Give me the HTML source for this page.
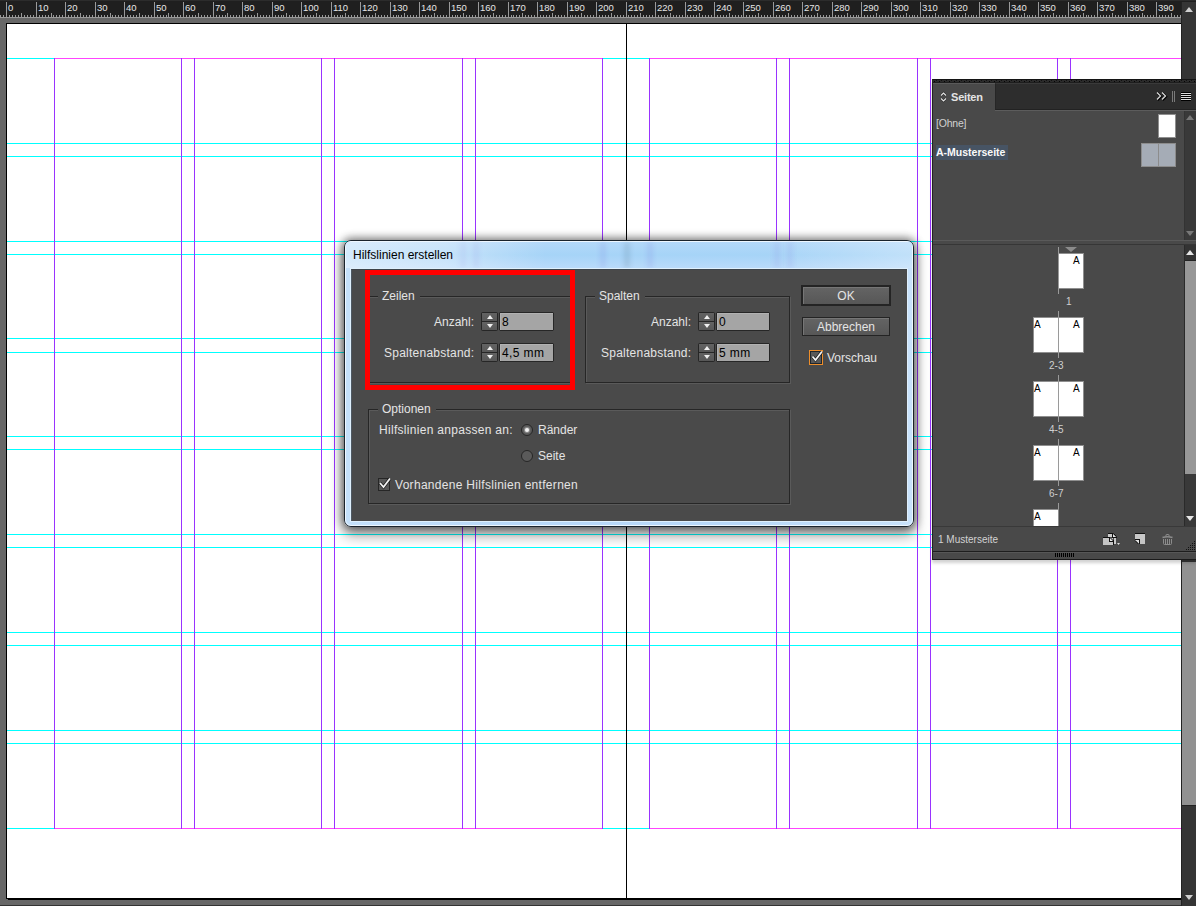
<!DOCTYPE html>
<html><head><meta charset="utf-8">
<style>
*{margin:0;padding:0;box-sizing:border-box}
html,body{width:1196px;height:906px;overflow:hidden;background:#676767;font-family:"Liberation Sans",sans-serif}
.abs{position:absolute}
#ruler{position:absolute;left:0;top:0;width:1196px;height:18px;background:#1f1f1f;border-top:1px solid #2c2c2c}
#ruler svg{position:absolute;left:0;top:0}
.rl{position:absolute;top:1px;font-size:9.5px;line-height:11px;color:#e6e6e6;letter-spacing:0}
#page{position:absolute;left:6px;top:23px;width:1176px;height:876px;background:#fff;border:1px solid #000}
#pshadow{position:absolute;left:8px;top:899px;width:1173px;height:1px;background:#000}
#botline{position:absolute;left:0;top:905px;width:1196px;height:1px;background:#333}
#vscroll{position:absolute;left:1181px;top:2px;width:15px;height:904px;background:#353535;border-left:1px solid #222}
#guides{position:absolute;left:0;top:0}
.tri-up{position:absolute;width:0;height:0;border-left:4px solid transparent;border-right:4px solid transparent;border-bottom:5px solid #d0d0d0}
.tri-dn{position:absolute;width:0;height:0;border-left:4px solid transparent;border-right:4px solid transparent;border-top:5px solid #d0d0d0}
</style></head><body>

<div id="ruler">
<svg width="1196" height="18" style="top:-1px"><g fill="#9a9a9a" shape-rendering="crispEdges"><rect x="0" y="15" width="1" height="2"/><rect x="3" y="15" width="1" height="2"/><rect x="6" y="2" width="1" height="15"/><rect x="9" y="15" width="1" height="2"/><rect x="12" y="15" width="1" height="2"/><rect x="15" y="15" width="1" height="2"/><rect x="18" y="15" width="1" height="2"/><rect x="21" y="13" width="1" height="4"/><rect x="24" y="15" width="1" height="2"/><rect x="27" y="15" width="1" height="2"/><rect x="30" y="15" width="1" height="2"/><rect x="33" y="15" width="1" height="2"/><rect x="36" y="2" width="1" height="15"/><rect x="39" y="15" width="1" height="2"/><rect x="42" y="15" width="1" height="2"/><rect x="45" y="15" width="1" height="2"/><rect x="48" y="15" width="1" height="2"/><rect x="51" y="13" width="1" height="4"/><rect x="53" y="15" width="1" height="2"/><rect x="56" y="15" width="1" height="2"/><rect x="59" y="15" width="1" height="2"/><rect x="62" y="15" width="1" height="2"/><rect x="65" y="2" width="1" height="15"/><rect x="68" y="15" width="1" height="2"/><rect x="71" y="15" width="1" height="2"/><rect x="74" y="15" width="1" height="2"/><rect x="77" y="15" width="1" height="2"/><rect x="80" y="13" width="1" height="4"/><rect x="83" y="15" width="1" height="2"/><rect x="86" y="15" width="1" height="2"/><rect x="89" y="15" width="1" height="2"/><rect x="92" y="15" width="1" height="2"/><rect x="95" y="2" width="1" height="15"/><rect x="98" y="15" width="1" height="2"/><rect x="101" y="15" width="1" height="2"/><rect x="104" y="15" width="1" height="2"/><rect x="107" y="15" width="1" height="2"/><rect x="110" y="13" width="1" height="4"/><rect x="112" y="15" width="1" height="2"/><rect x="115" y="15" width="1" height="2"/><rect x="118" y="15" width="1" height="2"/><rect x="121" y="15" width="1" height="2"/><rect x="124" y="2" width="1" height="15"/><rect x="127" y="15" width="1" height="2"/><rect x="130" y="15" width="1" height="2"/><rect x="133" y="15" width="1" height="2"/><rect x="136" y="15" width="1" height="2"/><rect x="139" y="13" width="1" height="4"/><rect x="142" y="15" width="1" height="2"/><rect x="145" y="15" width="1" height="2"/><rect x="148" y="15" width="1" height="2"/><rect x="151" y="15" width="1" height="2"/><rect x="154" y="2" width="1" height="15"/><rect x="157" y="15" width="1" height="2"/><rect x="160" y="15" width="1" height="2"/><rect x="163" y="15" width="1" height="2"/><rect x="166" y="15" width="1" height="2"/><rect x="168" y="13" width="1" height="4"/><rect x="171" y="15" width="1" height="2"/><rect x="174" y="15" width="1" height="2"/><rect x="177" y="15" width="1" height="2"/><rect x="180" y="15" width="1" height="2"/><rect x="183" y="2" width="1" height="15"/><rect x="186" y="15" width="1" height="2"/><rect x="189" y="15" width="1" height="2"/><rect x="192" y="15" width="1" height="2"/><rect x="195" y="15" width="1" height="2"/><rect x="198" y="13" width="1" height="4"/><rect x="201" y="15" width="1" height="2"/><rect x="204" y="15" width="1" height="2"/><rect x="207" y="15" width="1" height="2"/><rect x="210" y="15" width="1" height="2"/><rect x="213" y="2" width="1" height="15"/><rect x="216" y="15" width="1" height="2"/><rect x="219" y="15" width="1" height="2"/><rect x="222" y="15" width="1" height="2"/><rect x="225" y="15" width="1" height="2"/><rect x="227" y="13" width="1" height="4"/><rect x="230" y="15" width="1" height="2"/><rect x="233" y="15" width="1" height="2"/><rect x="236" y="15" width="1" height="2"/><rect x="239" y="15" width="1" height="2"/><rect x="242" y="2" width="1" height="15"/><rect x="245" y="15" width="1" height="2"/><rect x="248" y="15" width="1" height="2"/><rect x="251" y="15" width="1" height="2"/><rect x="254" y="15" width="1" height="2"/><rect x="257" y="13" width="1" height="4"/><rect x="260" y="15" width="1" height="2"/><rect x="263" y="15" width="1" height="2"/><rect x="266" y="15" width="1" height="2"/><rect x="269" y="15" width="1" height="2"/><rect x="272" y="2" width="1" height="15"/><rect x="275" y="15" width="1" height="2"/><rect x="278" y="15" width="1" height="2"/><rect x="281" y="15" width="1" height="2"/><rect x="283" y="15" width="1" height="2"/><rect x="286" y="13" width="1" height="4"/><rect x="289" y="15" width="1" height="2"/><rect x="292" y="15" width="1" height="2"/><rect x="295" y="15" width="1" height="2"/><rect x="298" y="15" width="1" height="2"/><rect x="301" y="2" width="1" height="15"/><rect x="304" y="15" width="1" height="2"/><rect x="307" y="15" width="1" height="2"/><rect x="310" y="15" width="1" height="2"/><rect x="313" y="15" width="1" height="2"/><rect x="316" y="13" width="1" height="4"/><rect x="319" y="15" width="1" height="2"/><rect x="322" y="15" width="1" height="2"/><rect x="325" y="15" width="1" height="2"/><rect x="328" y="15" width="1" height="2"/><rect x="331" y="2" width="1" height="15"/><rect x="334" y="15" width="1" height="2"/><rect x="337" y="15" width="1" height="2"/><rect x="340" y="15" width="1" height="2"/><rect x="342" y="15" width="1" height="2"/><rect x="345" y="13" width="1" height="4"/><rect x="348" y="15" width="1" height="2"/><rect x="351" y="15" width="1" height="2"/><rect x="354" y="15" width="1" height="2"/><rect x="357" y="15" width="1" height="2"/><rect x="360" y="2" width="1" height="15"/><rect x="363" y="15" width="1" height="2"/><rect x="366" y="15" width="1" height="2"/><rect x="369" y="15" width="1" height="2"/><rect x="372" y="15" width="1" height="2"/><rect x="375" y="13" width="1" height="4"/><rect x="378" y="15" width="1" height="2"/><rect x="381" y="15" width="1" height="2"/><rect x="384" y="15" width="1" height="2"/><rect x="387" y="15" width="1" height="2"/><rect x="390" y="2" width="1" height="15"/><rect x="393" y="15" width="1" height="2"/><rect x="396" y="15" width="1" height="2"/><rect x="398" y="15" width="1" height="2"/><rect x="401" y="15" width="1" height="2"/><rect x="404" y="13" width="1" height="4"/><rect x="407" y="15" width="1" height="2"/><rect x="410" y="15" width="1" height="2"/><rect x="413" y="15" width="1" height="2"/><rect x="416" y="15" width="1" height="2"/><rect x="419" y="2" width="1" height="15"/><rect x="422" y="15" width="1" height="2"/><rect x="425" y="15" width="1" height="2"/><rect x="428" y="15" width="1" height="2"/><rect x="431" y="15" width="1" height="2"/><rect x="434" y="13" width="1" height="4"/><rect x="437" y="15" width="1" height="2"/><rect x="440" y="15" width="1" height="2"/><rect x="443" y="15" width="1" height="2"/><rect x="446" y="15" width="1" height="2"/><rect x="449" y="2" width="1" height="15"/><rect x="452" y="15" width="1" height="2"/><rect x="455" y="15" width="1" height="2"/><rect x="457" y="15" width="1" height="2"/><rect x="460" y="15" width="1" height="2"/><rect x="463" y="13" width="1" height="4"/><rect x="466" y="15" width="1" height="2"/><rect x="469" y="15" width="1" height="2"/><rect x="472" y="15" width="1" height="2"/><rect x="475" y="15" width="1" height="2"/><rect x="478" y="2" width="1" height="15"/><rect x="481" y="15" width="1" height="2"/><rect x="484" y="15" width="1" height="2"/><rect x="487" y="15" width="1" height="2"/><rect x="490" y="15" width="1" height="2"/><rect x="493" y="13" width="1" height="4"/><rect x="496" y="15" width="1" height="2"/><rect x="499" y="15" width="1" height="2"/><rect x="502" y="15" width="1" height="2"/><rect x="505" y="15" width="1" height="2"/><rect x="508" y="2" width="1" height="15"/><rect x="511" y="15" width="1" height="2"/><rect x="513" y="15" width="1" height="2"/><rect x="516" y="15" width="1" height="2"/><rect x="519" y="15" width="1" height="2"/><rect x="522" y="13" width="1" height="4"/><rect x="525" y="15" width="1" height="2"/><rect x="528" y="15" width="1" height="2"/><rect x="531" y="15" width="1" height="2"/><rect x="534" y="15" width="1" height="2"/><rect x="537" y="2" width="1" height="15"/><rect x="540" y="15" width="1" height="2"/><rect x="543" y="15" width="1" height="2"/><rect x="546" y="15" width="1" height="2"/><rect x="549" y="15" width="1" height="2"/><rect x="552" y="13" width="1" height="4"/><rect x="555" y="15" width="1" height="2"/><rect x="558" y="15" width="1" height="2"/><rect x="561" y="15" width="1" height="2"/><rect x="564" y="15" width="1" height="2"/><rect x="567" y="2" width="1" height="15"/><rect x="570" y="15" width="1" height="2"/><rect x="572" y="15" width="1" height="2"/><rect x="575" y="15" width="1" height="2"/><rect x="578" y="15" width="1" height="2"/><rect x="581" y="13" width="1" height="4"/><rect x="584" y="15" width="1" height="2"/><rect x="587" y="15" width="1" height="2"/><rect x="590" y="15" width="1" height="2"/><rect x="593" y="15" width="1" height="2"/><rect x="596" y="2" width="1" height="15"/><rect x="599" y="15" width="1" height="2"/><rect x="602" y="15" width="1" height="2"/><rect x="605" y="15" width="1" height="2"/><rect x="608" y="15" width="1" height="2"/><rect x="611" y="13" width="1" height="4"/><rect x="614" y="15" width="1" height="2"/><rect x="617" y="15" width="1" height="2"/><rect x="620" y="15" width="1" height="2"/><rect x="623" y="15" width="1" height="2"/><rect x="626" y="2" width="1" height="15"/><rect x="628" y="15" width="1" height="2"/><rect x="631" y="15" width="1" height="2"/><rect x="634" y="15" width="1" height="2"/><rect x="637" y="15" width="1" height="2"/><rect x="640" y="13" width="1" height="4"/><rect x="643" y="15" width="1" height="2"/><rect x="646" y="15" width="1" height="2"/><rect x="649" y="15" width="1" height="2"/><rect x="652" y="15" width="1" height="2"/><rect x="655" y="2" width="1" height="15"/><rect x="658" y="15" width="1" height="2"/><rect x="661" y="15" width="1" height="2"/><rect x="664" y="15" width="1" height="2"/><rect x="667" y="15" width="1" height="2"/><rect x="670" y="13" width="1" height="4"/><rect x="673" y="15" width="1" height="2"/><rect x="676" y="15" width="1" height="2"/><rect x="679" y="15" width="1" height="2"/><rect x="682" y="15" width="1" height="2"/><rect x="685" y="2" width="1" height="15"/><rect x="687" y="15" width="1" height="2"/><rect x="690" y="15" width="1" height="2"/><rect x="693" y="15" width="1" height="2"/><rect x="696" y="15" width="1" height="2"/><rect x="699" y="13" width="1" height="4"/><rect x="702" y="15" width="1" height="2"/><rect x="705" y="15" width="1" height="2"/><rect x="708" y="15" width="1" height="2"/><rect x="711" y="15" width="1" height="2"/><rect x="714" y="2" width="1" height="15"/><rect x="717" y="15" width="1" height="2"/><rect x="720" y="15" width="1" height="2"/><rect x="723" y="15" width="1" height="2"/><rect x="726" y="15" width="1" height="2"/><rect x="729" y="13" width="1" height="4"/><rect x="732" y="15" width="1" height="2"/><rect x="735" y="15" width="1" height="2"/><rect x="738" y="15" width="1" height="2"/><rect x="741" y="15" width="1" height="2"/><rect x="743" y="2" width="1" height="15"/><rect x="746" y="15" width="1" height="2"/><rect x="749" y="15" width="1" height="2"/><rect x="752" y="15" width="1" height="2"/><rect x="755" y="15" width="1" height="2"/><rect x="758" y="13" width="1" height="4"/><rect x="761" y="15" width="1" height="2"/><rect x="764" y="15" width="1" height="2"/><rect x="767" y="15" width="1" height="2"/><rect x="770" y="15" width="1" height="2"/><rect x="773" y="2" width="1" height="15"/><rect x="776" y="15" width="1" height="2"/><rect x="779" y="15" width="1" height="2"/><rect x="782" y="15" width="1" height="2"/><rect x="785" y="15" width="1" height="2"/><rect x="788" y="13" width="1" height="4"/><rect x="791" y="15" width="1" height="2"/><rect x="794" y="15" width="1" height="2"/><rect x="797" y="15" width="1" height="2"/><rect x="800" y="15" width="1" height="2"/><rect x="802" y="2" width="1" height="15"/><rect x="805" y="15" width="1" height="2"/><rect x="808" y="15" width="1" height="2"/><rect x="811" y="15" width="1" height="2"/><rect x="814" y="15" width="1" height="2"/><rect x="817" y="13" width="1" height="4"/><rect x="820" y="15" width="1" height="2"/><rect x="823" y="15" width="1" height="2"/><rect x="826" y="15" width="1" height="2"/><rect x="829" y="15" width="1" height="2"/><rect x="832" y="2" width="1" height="15"/><rect x="835" y="15" width="1" height="2"/><rect x="838" y="15" width="1" height="2"/><rect x="841" y="15" width="1" height="2"/><rect x="844" y="15" width="1" height="2"/><rect x="847" y="13" width="1" height="4"/><rect x="850" y="15" width="1" height="2"/><rect x="853" y="15" width="1" height="2"/><rect x="856" y="15" width="1" height="2"/><rect x="858" y="15" width="1" height="2"/><rect x="861" y="2" width="1" height="15"/><rect x="864" y="15" width="1" height="2"/><rect x="867" y="15" width="1" height="2"/><rect x="870" y="15" width="1" height="2"/><rect x="873" y="15" width="1" height="2"/><rect x="876" y="13" width="1" height="4"/><rect x="879" y="15" width="1" height="2"/><rect x="882" y="15" width="1" height="2"/><rect x="885" y="15" width="1" height="2"/><rect x="888" y="15" width="1" height="2"/><rect x="891" y="2" width="1" height="15"/><rect x="894" y="15" width="1" height="2"/><rect x="897" y="15" width="1" height="2"/><rect x="900" y="15" width="1" height="2"/><rect x="903" y="15" width="1" height="2"/><rect x="906" y="13" width="1" height="4"/><rect x="909" y="15" width="1" height="2"/><rect x="912" y="15" width="1" height="2"/><rect x="914" y="15" width="1" height="2"/><rect x="917" y="15" width="1" height="2"/><rect x="920" y="2" width="1" height="15"/><rect x="923" y="15" width="1" height="2"/><rect x="926" y="15" width="1" height="2"/><rect x="929" y="15" width="1" height="2"/><rect x="932" y="15" width="1" height="2"/><rect x="935" y="13" width="1" height="4"/><rect x="938" y="15" width="1" height="2"/><rect x="941" y="15" width="1" height="2"/><rect x="944" y="15" width="1" height="2"/><rect x="947" y="15" width="1" height="2"/><rect x="950" y="2" width="1" height="15"/><rect x="953" y="15" width="1" height="2"/><rect x="956" y="15" width="1" height="2"/><rect x="959" y="15" width="1" height="2"/><rect x="962" y="15" width="1" height="2"/><rect x="965" y="13" width="1" height="4"/><rect x="968" y="15" width="1" height="2"/><rect x="971" y="15" width="1" height="2"/><rect x="973" y="15" width="1" height="2"/><rect x="976" y="15" width="1" height="2"/><rect x="979" y="2" width="1" height="15"/><rect x="982" y="15" width="1" height="2"/><rect x="985" y="15" width="1" height="2"/><rect x="988" y="15" width="1" height="2"/><rect x="991" y="15" width="1" height="2"/><rect x="994" y="13" width="1" height="4"/><rect x="997" y="15" width="1" height="2"/><rect x="1000" y="15" width="1" height="2"/><rect x="1003" y="15" width="1" height="2"/><rect x="1006" y="15" width="1" height="2"/><rect x="1009" y="2" width="1" height="15"/><rect x="1012" y="15" width="1" height="2"/><rect x="1015" y="15" width="1" height="2"/><rect x="1018" y="15" width="1" height="2"/><rect x="1021" y="15" width="1" height="2"/><rect x="1024" y="13" width="1" height="4"/><rect x="1027" y="15" width="1" height="2"/><rect x="1029" y="15" width="1" height="2"/><rect x="1032" y="15" width="1" height="2"/><rect x="1035" y="15" width="1" height="2"/><rect x="1038" y="2" width="1" height="15"/><rect x="1041" y="15" width="1" height="2"/><rect x="1044" y="15" width="1" height="2"/><rect x="1047" y="15" width="1" height="2"/><rect x="1050" y="15" width="1" height="2"/><rect x="1053" y="13" width="1" height="4"/><rect x="1056" y="15" width="1" height="2"/><rect x="1059" y="15" width="1" height="2"/><rect x="1062" y="15" width="1" height="2"/><rect x="1065" y="15" width="1" height="2"/><rect x="1068" y="2" width="1" height="15"/><rect x="1071" y="15" width="1" height="2"/><rect x="1074" y="15" width="1" height="2"/><rect x="1077" y="15" width="1" height="2"/><rect x="1080" y="15" width="1" height="2"/><rect x="1083" y="13" width="1" height="4"/><rect x="1086" y="15" width="1" height="2"/><rect x="1088" y="15" width="1" height="2"/><rect x="1091" y="15" width="1" height="2"/><rect x="1094" y="15" width="1" height="2"/><rect x="1097" y="2" width="1" height="15"/><rect x="1100" y="15" width="1" height="2"/><rect x="1103" y="15" width="1" height="2"/><rect x="1106" y="15" width="1" height="2"/><rect x="1109" y="15" width="1" height="2"/><rect x="1112" y="13" width="1" height="4"/><rect x="1115" y="15" width="1" height="2"/><rect x="1118" y="15" width="1" height="2"/><rect x="1121" y="15" width="1" height="2"/><rect x="1124" y="15" width="1" height="2"/><rect x="1127" y="2" width="1" height="15"/><rect x="1130" y="15" width="1" height="2"/><rect x="1133" y="15" width="1" height="2"/><rect x="1136" y="15" width="1" height="2"/><rect x="1139" y="15" width="1" height="2"/><rect x="1142" y="13" width="1" height="4"/><rect x="1144" y="15" width="1" height="2"/><rect x="1147" y="15" width="1" height="2"/><rect x="1150" y="15" width="1" height="2"/><rect x="1153" y="15" width="1" height="2"/><rect x="1156" y="2" width="1" height="15"/><rect x="1159" y="15" width="1" height="2"/><rect x="1162" y="15" width="1" height="2"/><rect x="1165" y="15" width="1" height="2"/><rect x="1168" y="15" width="1" height="2"/><rect x="1171" y="13" width="1" height="4"/><rect x="1174" y="15" width="1" height="2"/><rect x="1177" y="15" width="1" height="2"/><rect x="1180" y="15" width="1" height="2"/><rect x="0" y="17" width="1181" height="1"/></g></svg>
<div class="rl" style="left:8px">0</div><div class="rl" style="left:38px">10</div><div class="rl" style="left:67px">20</div><div class="rl" style="left:97px">30</div><div class="rl" style="left:126px">40</div><div class="rl" style="left:156px">50</div><div class="rl" style="left:185px">60</div><div class="rl" style="left:215px">70</div><div class="rl" style="left:244px">80</div><div class="rl" style="left:274px">90</div><div class="rl" style="left:303px">100</div><div class="rl" style="left:333px">110</div><div class="rl" style="left:362px">120</div><div class="rl" style="left:392px">130</div><div class="rl" style="left:421px">140</div><div class="rl" style="left:451px">150</div><div class="rl" style="left:480px">160</div><div class="rl" style="left:510px">170</div><div class="rl" style="left:539px">180</div><div class="rl" style="left:569px">190</div><div class="rl" style="left:598px">200</div><div class="rl" style="left:628px">210</div><div class="rl" style="left:657px">220</div><div class="rl" style="left:687px">230</div><div class="rl" style="left:716px">240</div><div class="rl" style="left:745px">250</div><div class="rl" style="left:775px">260</div><div class="rl" style="left:804px">270</div><div class="rl" style="left:834px">280</div><div class="rl" style="left:863px">290</div><div class="rl" style="left:893px">300</div><div class="rl" style="left:922px">310</div><div class="rl" style="left:952px">320</div><div class="rl" style="left:981px">330</div><div class="rl" style="left:1011px">340</div><div class="rl" style="left:1040px">350</div><div class="rl" style="left:1070px">360</div><div class="rl" style="left:1099px">370</div><div class="rl" style="left:1129px">380</div><div class="rl" style="left:1158px">390</div>
</div>

<div id="page"></div>
<div id="pshadow"></div>
<div id="botline"></div>

<svg id="guides" width="1196" height="906" shape-rendering="crispEdges"><rect x="7" y="58" width="1174" height="1" fill="#00ffff"/><rect x="7" y="143" width="1174" height="1" fill="#00ffff"/><rect x="7" y="156" width="1174" height="1" fill="#00ffff"/><rect x="7" y="241" width="1174" height="1" fill="#00ffff"/><rect x="7" y="254" width="1174" height="1" fill="#00ffff"/><rect x="7" y="338" width="1174" height="1" fill="#00ffff"/><rect x="7" y="352" width="1174" height="1" fill="#00ffff"/><rect x="7" y="436" width="1174" height="1" fill="#00ffff"/><rect x="7" y="449" width="1174" height="1" fill="#00ffff"/><rect x="7" y="534" width="1174" height="1" fill="#00ffff"/><rect x="7" y="547" width="1174" height="1" fill="#00ffff"/><rect x="7" y="632" width="1174" height="1" fill="#00ffff"/><rect x="7" y="645" width="1174" height="1" fill="#00ffff"/><rect x="7" y="730" width="1174" height="1" fill="#00ffff"/><rect x="7" y="743" width="1174" height="1" fill="#00ffff"/><rect x="7" y="828" width="1174" height="1" fill="#00ffff"/><rect x="54" y="58" width="549" height="1" fill="#ff44ff"/><rect x="649" y="58" width="532" height="1" fill="#ff44ff"/><rect x="54" y="828" width="549" height="1" fill="#ff44ff"/><rect x="649" y="828" width="532" height="1" fill="#ff44ff"/><rect x="54" y="58" width="1" height="771" fill="#9933ff"/><rect x="181" y="58" width="1" height="771" fill="#9933ff"/><rect x="194" y="58" width="1" height="771" fill="#9933ff"/><rect x="321" y="58" width="1" height="771" fill="#9933ff"/><rect x="334" y="58" width="1" height="771" fill="#9933ff"/><rect x="462" y="58" width="1" height="771" fill="#9933ff"/><rect x="475" y="58" width="1" height="771" fill="#9933ff"/><rect x="602" y="58" width="1" height="771" fill="#9933ff"/><rect x="649" y="58" width="1" height="771" fill="#9933ff"/><rect x="776" y="58" width="1" height="771" fill="#9933ff"/><rect x="789" y="58" width="1" height="771" fill="#9933ff"/><rect x="917" y="58" width="1" height="771" fill="#9933ff"/><rect x="930" y="58" width="1" height="771" fill="#9933ff"/><rect x="1057" y="58" width="1" height="771" fill="#9933ff"/><rect x="1070" y="58" width="1" height="771" fill="#9933ff"/><rect x="626" y="24" width="1" height="874" fill="#000"/></svg>

<div id="vscroll">
  <div class="tri-up" style="left:3px;top:5px"></div>
  <div class="abs" style="left:0;top:560px;width:14px;height:243px;background:#919191"></div>
  <div class="abs" style="left:0;top:803px;width:14px;height:1px;background:#222"></div>
  <div class="tri-dn" style="left:3px;top:893px"></div>
</div>

<!-- dialog -->
<div class="abs" style="left:344px;top:240px;width:570px;height:287px;border-radius:7px;box-shadow:0 0 9px 2px rgba(0,0,0,0.48),0 7px 14px 1px rgba(0,0,0,0.4)"></div>
<div id="dlg" class="abs" style="left:344px;top:240px;width:570px;height:287px;border-radius:7px;border:1px solid #1a232c;background:linear-gradient(90deg,#c4e0fa,#b8d8f8 30%,#b8d8f8 70%,#c8e2fb);overflow:hidden">
  <div class="abs" style="left:0;top:0;right:0;bottom:0;border-radius:6px;border:1px solid #eef7ff"></div>
  <div class="abs" style="left:1px;top:1px;width:566px;height:26px;background:linear-gradient(#b3d8f9,#a6d4f7 50%,#b9dafa)"></div>
  <!-- blurred guides in glass -->
  <div class="abs" style="left:115px;top:1px;width:6px;height:26px;background:rgba(120,110,220,0.16);filter:blur(2.5px)"></div>
  <div class="abs" style="left:128px;top:1px;width:6px;height:26px;background:rgba(120,110,220,0.16);filter:blur(2.5px)"></div>
  <div class="abs" style="left:255px;top:1px;width:6px;height:26px;background:rgba(120,110,220,0.16);filter:blur(2.5px)"></div>
  <div class="abs" style="left:279px;top:1px;width:6px;height:26px;background:rgba(60,90,110,0.16);filter:blur(2.5px)"></div>
  <div class="abs" style="left:302px;top:1px;width:6px;height:26px;background:rgba(120,110,220,0.16);filter:blur(2.5px)"></div>
  <div class="abs" style="left:429px;top:1px;width:6px;height:26px;background:rgba(120,110,220,0.14);filter:blur(2.5px)"></div>
  <div class="abs" style="left:442px;top:1px;width:6px;height:26px;background:rgba(120,110,220,0.14);filter:blur(2.5px)"></div>
  <div class="abs" style="left:1px;top:1px;width:566px;height:26px;background:linear-gradient(90deg,rgba(255,255,255,0.5) 0,rgba(255,255,255,0.35) 100px,rgba(255,255,255,0) 200px,rgba(255,255,255,0) 420px,rgba(255,255,255,0.3) 566px)"></div>
  <div class="abs" style="left:8px;top:7px;font-size:12px;line-height:14px;color:#000;white-space:nowrap">Hilfslinien erstellen</div>
</div>
<div id="client" class="abs" style="left:351px;top:269px;width:556px;height:252px;background:#4a4a4a;box-shadow:0 0 0 1px #dff0fd;border-top:1px solid #3e444a;border-left:1px solid #4f5963">
</div>
<style>
.t{position:absolute;font-size:12px;line-height:14px;color:#e4e4e4;white-space:nowrap}
.grp{position:absolute;border:1px solid #262626;box-shadow:inset 1px 1px 0 #5a5a5a, 1px 1px 0 #5a5a5a}
.glab{position:absolute;background:#4a4a4a;padding:0 5px 0 4px;font-size:12px;line-height:14px;color:#e4e4e4;white-space:nowrap}
.spin{position:absolute;width:17px;height:19px;background:#262626;border-radius:2px}
.spin .u,.spin .d{position:absolute;left:1px;width:15px;height:8px;background:linear-gradient(#636363,#575757)}
.spin .u{top:1px}.spin .d{top:10px}
.spin .au{position:absolute;left:5px;top:2px;width:0;height:0;border-left:3px solid transparent;border-right:3px solid transparent;border-bottom:4px solid #f0f0f0}
.spin .ad{position:absolute;left:5px;top:2px;width:0;height:0;border-left:3px solid transparent;border-right:3px solid transparent;border-top:4px solid #f0f0f0}
.inp{position:absolute;width:55px;height:19px;background:#a5a5a5;border:1px solid #262626;border-radius:1px;box-shadow:inset 1px 1px 0 #b2b2b2;font-size:12px;line-height:14px;color:#000;padding:2px 0 0 2px;white-space:nowrap;letter-spacing:0.4px}
.btn{position:absolute;background:linear-gradient(#646464,#575757);color:#e4e4e4;font-size:12px;line-height:14px;text-align:center;box-shadow:inset 1px 1px 0 #767676}
.cb{position:absolute;width:12px;height:13px;border:1px solid #262626;background:#575757}
.radio{position:absolute;width:12px;height:12px;border-radius:50%;border:1px solid #262626;background:#5a5a5a}
</style>

<!-- Zeilen group -->
<div class="grp" style="left:368px;top:296px;width:205px;height:87px"></div>
<div class="glab" style="left:378px;top:289px">Zeilen</div>
<div class="t" style="left:434px;top:315px">Anzahl:</div>
<div class="spin" style="left:481px;top:312px"><div class="u"><div class="au"></div></div><div class="d"><div class="ad"></div></div></div>
<div class="inp" style="left:499px;top:312px">8</div>
<div class="t" style="left:384px;top:346px;letter-spacing:0.24px">Spaltenabstand:</div>
<div class="spin" style="left:481px;top:343px"><div class="u"><div class="au"></div></div><div class="d"><div class="ad"></div></div></div>
<div class="inp" style="left:499px;top:343px">4,5 mm</div>

<!-- red highlight -->
<div class="abs" style="left:365px;top:270px;width:210px;height:120px;border:5px solid #ff0000"></div>

<!-- Spalten group -->
<div class="grp" style="left:585px;top:296px;width:205px;height:87px"></div>
<div class="glab" style="left:595px;top:289px">Spalten</div>
<div class="t" style="left:651px;top:315px">Anzahl:</div>
<div class="spin" style="left:698px;top:312px"><div class="u"><div class="au"></div></div><div class="d"><div class="ad"></div></div></div>
<div class="inp" style="left:716px;top:312px;width:54px">0</div>
<div class="t" style="left:601px;top:346px;letter-spacing:0.24px">Spaltenabstand:</div>
<div class="spin" style="left:698px;top:343px"><div class="u"><div class="au"></div></div><div class="d"><div class="ad"></div></div></div>
<div class="inp" style="left:716px;top:343px;width:54px">5 mm</div>

<!-- buttons -->
<div class="btn" style="left:801px;top:285px;width:90px;height:21px;border:2px solid #242424;padding-top:2px">OK</div>
<div class="btn" style="left:802px;top:317px;width:88px;height:19px;border:1px solid #242424;padding-top:2px">Abbrechen</div>
<div class="abs" style="left:809px;top:350px;width:14px;height:15px;border:1px solid #ee8e2a;background:#595959;box-shadow:inset 0 0 0 1px #1f262d"></div>
<svg class="abs" style="left:809px;top:348px" width="16" height="16"><path d="M3.5 8.5 L6.5 12 L13 3.5" stroke="#1c1c1c" stroke-width="3.2" fill="none"/><path d="M3.5 8.5 L6.5 12 L13 3.5" stroke="#f2f2f2" stroke-width="1.8" fill="none"/></svg>
<div class="t" style="left:827px;top:351px">Vorschau</div>

<!-- Optionen group -->
<div class="grp" style="left:368px;top:409px;width:422px;height:95px"></div>
<div class="glab" style="left:378px;top:402px">Optionen</div>
<div class="t" style="left:379px;top:423px;letter-spacing:0.3px">Hilfslinien anpassen an:</div>
<div class="radio" style="left:521px;top:424px"><div class="abs" style="left:3px;top:3px;width:4px;height:4px;border-radius:50%;background:#f4f4f4;box-shadow:0 0 1px 1px rgba(255,255,255,0.35)"></div></div>
<div class="t" style="left:538px;top:423px">Ränder</div>
<div class="radio" style="left:521px;top:450px"></div>
<div class="t" style="left:538px;top:449px">Seite</div>
<div class="cb" style="left:378px;top:478px"></div>
<svg class="abs" style="left:377px;top:475px" width="16" height="16"><path d="M3 8 L6.5 12 L13 3.5" stroke="#1c1c1c" stroke-width="3.2" fill="none"/><path d="M3 8 L6.5 12 L13 3.5" stroke="#f2f2f2" stroke-width="1.8" fill="none"/></svg>
<div class="t" style="left:395px;top:478px;letter-spacing:0.3px">Vorhandene Hilfslinien entfernen</div>


<!-- panel -->
<style>
.pt{position:absolute;font-size:10.5px;line-height:12px;color:#d2d2d2;white-space:nowrap}
.thumb{position:absolute;background:#fff;border:1px solid #8f8f8f}
.pa{position:absolute;font-size:10px;line-height:10px;color:#000}
.plab{position:absolute;font-size:10px;line-height:12px;color:#d0d0d0;white-space:nowrap}
.spine{position:absolute;width:1px;background:#9a9a9a}
</style>
<div class="abs" style="left:932px;top:79px;width:264px;height:481px;background:#494949;border-left:1px solid #222;box-shadow:0 3px 3px rgba(0,0,0,0.18)"></div>
<!-- gripper band -->
<svg class="abs" style="left:933px;top:79px" width="263" height="4" shape-rendering="crispEdges"><defs><pattern id="grip" x="0" y="0" width="5" height="4" patternUnits="userSpaceOnUse"><rect width="5" height="4" fill="#2b2b2b"/><rect y="0" width="5" height="1" fill="#141414"/><rect x="1" y="2" width="1" height="1" fill="#050505"/><rect x="3" y="1" width="1" height="1" fill="#101010"/><rect y="3" width="5" height="1" fill="#1e1e1e"/></pattern></defs><rect width="263" height="4" fill="url(#grip)"/></svg>
<!-- tab bar -->
<div class="abs" style="left:995px;top:83px;width:201px;height:27px;background:#2d2d2d;border-left:1px solid #262626;border-top:1px solid #3a3a3a;border-bottom:1px solid #222"></div>
<div class="abs" style="left:995px;top:110px;width:201px;height:1px;background:#5c5c5c"></div>
<div class="abs" style="left:933px;top:83px;width:62px;height:1px;background:#5a5a5a"></div>
<!-- chevron icon -->
<svg class="abs" style="left:940px;top:91px" width="8" height="12"><path d="M1 4.5 L3.5 2 L6 4.5 M1 7.5 L3.5 10 L6 7.5" stroke="#111" stroke-width="2.2" fill="none" opacity="0.6"/><path d="M1 4.5 L3.5 2 L6 4.5 M1 7.5 L3.5 10 L6 7.5" stroke="#e6e6e6" stroke-width="1.1" fill="none"/></svg>
<div class="abs" style="left:951px;top:91px;font-size:11px;line-height:12px;font-weight:bold;color:#e4e4e4;white-space:nowrap;letter-spacing:-0.2px">Seiten</div>
<!-- >> icon -->
<svg class="abs" style="left:1155px;top:91px" width="14" height="11"><path d="M2 1.5 L5.5 5 L2 8.5 M7 1.5 L10.5 5 L7 8.5" stroke="#000" stroke-width="2.2" fill="none" transform="translate(0.6,0.6)"/><path d="M2 1.5 L5.5 5 L2 8.5 M7 1.5 L10.5 5 L7 8.5" stroke="#d8d8d8" stroke-width="1.3" fill="none"/></svg>
<div class="abs" style="left:1172px;top:91px;width:1px;height:11px;background:#7a7a7a"></div>
<div class="abs" style="left:1174px;top:91px;width:1px;height:11px;background:#7a7a7a"></div>
<div class="abs" style="left:1181px;top:92px;width:10px;height:9px;background:#000"></div>
<div class="abs" style="left:1181px;top:93px;width:10px;height:1px;background:#dcdcdc"></div>
<div class="abs" style="left:1181px;top:95px;width:10px;height:1px;background:#dcdcdc"></div>
<div class="abs" style="left:1181px;top:97px;width:10px;height:1px;background:#dcdcdc"></div>
<div class="abs" style="left:1181px;top:99px;width:10px;height:1px;background:#dcdcdc"></div>

<!-- masters section -->
<div class="pt" style="left:936px;top:117px;letter-spacing:-0.2px">[Ohne]</div>
<div class="thumb" style="left:1158px;top:114px;width:18px;height:24px"></div>
<div class="abs" style="left:936px;top:145px;width:72px;height:15px;background:#475464"></div>
<div class="abs" style="left:936px;top:146px;font-size:10.5px;line-height:12px;font-weight:bold;color:#fafafa;white-space:nowrap">A-Musterseite</div>
<div class="abs" style="left:1141px;top:143px;width:35px;height:24px;background:#a5acb6;border:1px solid #8c8c8c"></div>
<div class="abs" style="left:1158px;top:143px;width:1px;height:24px;background:#8c8c8c"></div>
<!-- top scrollbar -->
<div class="abs" style="left:1184px;top:111px;width:12px;height:129px;background:#393939;border-left:1px solid #333"></div>
<div class="abs" style="left:1186px;top:115px;width:0;height:0;border-left:4px solid transparent;border-right:4px solid transparent;border-bottom:5px solid #787878"></div>
<div class="abs" style="left:1186px;top:231px;width:0;height:0;border-left:4px solid transparent;border-right:4px solid transparent;border-top:5px solid #787878"></div>
<!-- divider -->
<div class="abs" style="left:933px;top:240px;width:263px;height:1px;background:#5a5a5a"></div>
<div class="abs" style="left:933px;top:244px;width:263px;height:1px;background:#363636"></div>

<!-- pages section -->
<div class="spine" style="left:1058px;top:247px;height:47px"></div>
<div class="abs" style="left:1065px;top:247px;width:0;height:0;border-left:6px solid transparent;border-right:6px solid transparent;border-top:5px solid #8c8c8c"></div>
<div class="thumb" style="left:1059px;top:253px;width:25px;height:36px;border-left:0"></div>
<div class="pa" style="left:1073px;top:256px">A</div>
<div class="plab" style="left:1066px;top:296px">1</div>

<div class="spine" style="left:1058px;top:311px;height:47px"></div>
<div class="thumb" style="left:1033px;top:317px;width:51px;height:36px"></div>
<div class="spine" style="left:1058px;top:317px;height:36px"></div>
<div class="pa" style="left:1034px;top:320px">A</div>
<div class="pa" style="left:1073px;top:320px">A</div>
<div class="plab" style="left:1049px;top:360px">2-3</div>

<div class="spine" style="left:1058px;top:375px;height:47px"></div>
<div class="thumb" style="left:1033px;top:381px;width:51px;height:36px"></div>
<div class="spine" style="left:1058px;top:381px;height:36px"></div>
<div class="pa" style="left:1034px;top:384px">A</div>
<div class="pa" style="left:1073px;top:384px">A</div>
<div class="plab" style="left:1049px;top:424px">4-5</div>

<div class="spine" style="left:1058px;top:439px;height:47px"></div>
<div class="thumb" style="left:1033px;top:445px;width:51px;height:36px"></div>
<div class="spine" style="left:1058px;top:445px;height:36px"></div>
<div class="pa" style="left:1034px;top:448px">A</div>
<div class="pa" style="left:1073px;top:448px">A</div>
<div class="plab" style="left:1049px;top:488px">6-7</div>

<div class="spine" style="left:1058px;top:503px;height:23px"></div>
<div class="thumb" style="left:1033px;top:509px;width:26px;height:17px;border-bottom:0"></div>
<div class="pa" style="left:1034px;top:512px">A</div>

<!-- lower scrollbar -->
<div class="abs" style="left:1184px;top:245px;width:12px;height:281px;background:#393939;border-left:1px solid #2a2a2a"></div>
<div class="abs" style="left:1185px;top:245px;width:11px;height:16px;background:#333;border-bottom:1px solid #222"></div>
<div class="abs" style="left:1186px;top:250px;width:0;height:0;border-left:4px solid transparent;border-right:4px solid transparent;border-bottom:5px solid #e6e6e6"></div>
<div class="abs" style="left:1185px;top:261px;width:11px;height:213px;background:#979797"></div>
<div class="abs" style="left:1186px;top:516px;width:0;height:0;border-left:4px solid transparent;border-right:4px solid transparent;border-top:5px solid #e6e6e6"></div>

<!-- footer -->
<div class="abs" style="left:933px;top:526px;width:263px;height:1px;background:#393939"></div>
<div class="abs" style="left:938px;top:534px;font-size:10px;line-height:12px;color:#d2d2d2;white-space:nowrap">1 Musterseite</div>
<svg class="abs" style="left:1100px;top:530px" width="22" height="17" shape-rendering="crispEdges">
 <rect x="3" y="7" width="7" height="1" fill="#111"/>
 <rect x="3" y="8" width="10" height="7" fill="#c4c4c4"/>
 <rect x="8" y="3" width="4" height="1" fill="#111"/>
 <rect x="8" y="4" width="4" height="3" fill="#cdcdcd"/>
 <rect x="12" y="3" width="1" height="5" fill="#111"/>
 <path d="M13 4 L13 7 L16 7 Z" fill="#e6e6e6" shape-rendering="auto"/>
 <path d="M13.5 3.5 L16.5 6.5" stroke="#111" stroke-width="1" shape-rendering="auto"/>
 <rect x="12" y="7" width="5" height="1" fill="#111"/>
 <rect x="9" y="8" width="1" height="4" fill="#111"/>
 <rect x="9" y="11" width="5" height="1" fill="#111"/>
 <path d="M10 8 L10 11 L13 11 Z" fill="#e6e6e6" shape-rendering="auto"/>
 <path d="M10.5 8 L13.5 11" stroke="#111" stroke-width="1" shape-rendering="auto"/>
 <rect x="14" y="8" width="2" height="6" fill="#c8c8c8"/>
 <rect x="13" y="10" width="1" height="5" fill="#111"/>
 <path d="M17 13 L20 13 L18.5 15 Z" fill="#dcdcdc" shape-rendering="auto"/>
</svg>
<svg class="abs" style="left:1130px;top:530px" width="18" height="16" shape-rendering="crispEdges">
 <rect x="5" y="3" width="10" height="1" fill="#111"/>
 <rect x="5" y="4" width="10" height="6" fill="#c8c8c8"/>
 <rect x="10" y="10" width="5" height="4" fill="#c4c4c4"/>
 <rect x="5" y="9" width="5" height="1" fill="#111"/>
 <rect x="9" y="9" width="1" height="5" fill="#111"/>
 <path d="M5 10 L9 10 L9 14 Z" fill="#dedede" shape-rendering="auto"/>
 <path d="M5 10.5 L8.5 14" stroke="#111" stroke-width="1" shape-rendering="auto"/>
</svg>
<svg class="abs" style="left:1158px;top:530px" width="20" height="17">
 <g stroke="#8c8c8c" fill="none" stroke-width="1">
 <path d="M8 6.5 V5 Q8 4.5 8.5 4.5 H10.5 Q11 4.5 11 5 V6.5"/>
 <path d="M4.5 7.5 Q9.5 6 14.5 7.5" stroke-width="1.6"/>
 <path d="M5.5 9 V13.5 Q5.5 14.5 6.5 14.5 H12.5 Q13.5 14.5 13.5 13.5 V9"/>
 <path d="M7.5 9 V14 M9.5 9 V14 M11.5 9 V14"/>
 </g>
</svg>
<svg class="abs" style="left:1185px;top:540px" width="11" height="10">
 <g fill="#111"><rect x="9" y="1" width="1" height="1"/><rect x="7" y="3" width="1" height="1"/><rect x="9" y="3" width="1" height="1"/><rect x="5" y="5" width="1" height="1"/><rect x="7" y="5" width="1" height="1"/><rect x="9" y="5" width="1" height="1"/><rect x="3" y="7" width="1" height="1"/><rect x="5" y="7" width="1" height="1"/><rect x="7" y="7" width="1" height="1"/><rect x="9" y="7" width="1" height="1"/><rect x="1" y="9" width="1" height="1"/><rect x="3" y="9" width="1" height="1"/><rect x="5" y="9" width="1" height="1"/><rect x="7" y="9" width="1" height="1"/><rect x="9" y="9" width="1" height="1"/></g>
</svg>
<!-- bottom bar -->
<div class="abs" style="left:933px;top:551px;width:263px;height:1px;background:#1e1e1e"></div>
<div class="abs" style="left:933px;top:552px;width:263px;height:1px;background:#575757"></div>
<div class="abs" style="left:933px;top:559px;width:263px;height:1px;background:#1a1a1a"></div>
<svg class="abs" style="left:1055px;top:553px" width="20" height="5" shape-rendering="crispEdges"><g fill="#000"><rect x="0" y="0" width="1" height="4"/><rect x="2" y="0" width="1" height="4"/><rect x="4" y="0" width="1" height="4"/><rect x="6" y="0" width="1" height="4"/><rect x="8" y="0" width="1" height="4"/><rect x="10" y="0" width="1" height="4"/><rect x="12" y="0" width="1" height="4"/><rect x="14" y="0" width="1" height="4"/><rect x="16" y="0" width="1" height="4"/><rect x="18" y="0" width="1" height="4"/></g></svg>


</body></html>
